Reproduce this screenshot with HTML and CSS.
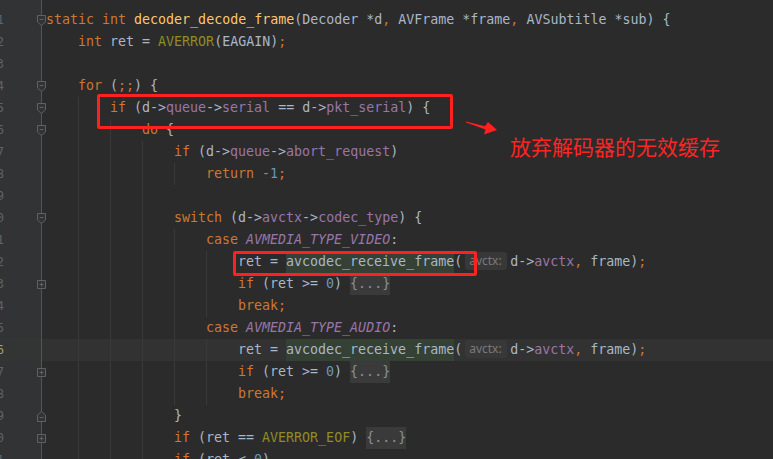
FILE: index.html
```html
<!DOCTYPE html>
<html lang="zh">
<head>
    <meta charset="UTF-8">
    <title>decoder_decode_frame</title>
    <link rel="stylesheet" href="styles.css">
</head>
<body>
<div class="editor">
    <div class="line">
        <div class="gut"><span class="num">581</span><svg class="fold" viewBox="0 0 9 11"><path d="M0.5 0.5H8.5V7L4.5 10.5L0.5 7Z"/><path d="M2.5 4.5H6.5"/></svg></div>
        <div class="code"><span class="t"><span class="k">static int</span> <span class="f">decoder_decode_frame</span>(Decoder *d<span class="k">,</span> AVFrame *frame<span class="k">,</span> AVSubtitle *sub) {</span></div>
    </div>
    <div class="line">
        <div class="gut"><span class="num">582</span></div>
        <div class="code"><span class="i"></span><span class="t"><span class="k">int</span> ret = <span class="m">AVERROR</span>(EAGAIN)<span class="k">;</span></span></div>
    </div>
    <div class="line">
        <div class="gut"><span class="num">583</span></div>
        <div class="code"></div>
    </div>
    <div class="line">
        <div class="gut"><span class="num">584</span><svg class="fold" viewBox="0 0 9 11"><path d="M0.5 0.5H8.5V7L4.5 10.5L0.5 7Z"/><path d="M2.5 4.5H6.5"/></svg></div>
        <div class="code"><span class="i"></span><span class="t"><span class="k">for</span> (<span class="k">;;</span>) {</span></div>
    </div>
    <div class="line">
        <div class="gut"><span class="num">585</span><svg class="fold" viewBox="0 0 9 11"><path d="M0.5 0.5H8.5V7L4.5 10.5L0.5 7Z"/><path d="M2.5 4.5H6.5"/></svg></div>
        <div class="code"><span class="i"></span><span class="i g"></span><span class="t"><span class="k">if</span> (d-&gt;<span class="p">queue</span>-&gt;<span class="p">serial</span> == d-&gt;<span class="p">pkt_serial</span>) {</span></div>
    </div>
    <div class="line">
        <div class="gut"><span class="num">586</span><svg class="fold" viewBox="0 0 9 11"><path d="M0.5 0.5H8.5V7L4.5 10.5L0.5 7Z"/><path d="M2.5 4.5H6.5"/></svg></div>
        <div class="code"><span class="i"></span><span class="i g"></span><span class="i g"></span><span class="t"><span class="k">do</span> {</span></div>
    </div>
    <div class="line">
        <div class="gut"><span class="num">587</span></div>
        <div class="code"><span class="i"></span><span class="i g"></span><span class="i g"></span><span class="i g"></span><span class="t"><span class="k">if</span> (d-&gt;<span class="p">queue</span>-&gt;<span class="p">abort_request</span>)</span></div>
    </div>
    <div class="line">
        <div class="gut"><span class="num">588</span></div>
        <div class="code"><span class="i"></span><span class="i g"></span><span class="i g"></span><span class="i g"></span><span class="i g"></span><span class="t"><span class="k">return</span> <span class="n">-1</span><span class="k">;</span></span></div>
    </div>
    <div class="line">
        <div class="gut"><span class="num">589</span></div>
        <div class="code"><span class="i"></span><span class="i g"></span><span class="i g"></span><span class="i g"></span></div>
    </div>
    <div class="line">
        <div class="gut"><span class="num">590</span><svg class="fold" viewBox="0 0 9 11"><path d="M0.5 0.5H8.5V7L4.5 10.5L0.5 7Z"/><path d="M2.5 4.5H6.5"/></svg></div>
        <div class="code"><span class="i"></span><span class="i g"></span><span class="i g"></span><span class="i g"></span><span class="t"><span class="k">switch</span> (d-&gt;<span class="p">avctx</span>-&gt;<span class="p">codec_type</span>) {</span></div>
    </div>
    <div class="line">
        <div class="gut"><span class="num">591</span></div>
        <div class="code"><span class="i"></span><span class="i g"></span><span class="i g"></span><span class="i g"></span><span class="i g"></span><span class="t"><span class="k">case</span> <span class="e">AVMEDIA_TYPE_VIDEO</span>:</span></div>
    </div>
    <div class="line">
        <div class="gut"><span class="num">592</span></div>
        <div class="code"><span class="i"></span><span class="i g"></span><span class="i g"></span><span class="i g"></span><span class="i g"></span><span class="i g"></span><span class="t">ret = <span class="u">avcodec_receive_frame</span>(<span class="hint">avctx:</span>d-&gt;<span class="p">avctx</span><span class="k">,</span> frame)<span class="k">;</span></span></div>
    </div>
    <div class="line">
        <div class="gut"><span class="num">593</span><svg class="fold" viewBox="0 0 9 11"><path d="M0.5 1.5H8.5V9.5H0.5Z"/><path d="M2.5 5.5H6.5M4.5 3.5V7.5"/></svg></div>
        <div class="code"><span class="i"></span><span class="i g"></span><span class="i g"></span><span class="i g"></span><span class="i g"></span><span class="i g"></span><span class="t"><span class="k">if</span> (ret &gt;= <span class="n">0</span>) <span class="folded">{...}</span></span></div>
    </div>
    <div class="line">
        <div class="gut"><span class="num">594</span></div>
        <div class="code"><span class="i"></span><span class="i g"></span><span class="i g"></span><span class="i g"></span><span class="i g"></span><span class="i g"></span><span class="t"><span class="k">break;</span></span></div>
    </div>
    <div class="line">
        <div class="gut"><span class="num">595</span></div>
        <div class="code"><span class="i"></span><span class="i g"></span><span class="i g"></span><span class="i g"></span><span class="i g"></span><span class="t"><span class="k">case</span> <span class="e">AVMEDIA_TYPE_AUDIO</span>:</span></div>
    </div>
    <div class="line cur">
        <div class="gut"><span class="num">596</span></div>
        <div class="code"><span class="i"></span><span class="i g"></span><span class="i g"></span><span class="i g"></span><span class="i g"></span><span class="i g"></span><span class="t">ret = <span class="u">avcodec_receive_frame</span>(<span class="hint">avctx:</span>d-&gt;<span class="p">avctx</span><span class="k">,</span> frame)<span class="k">;</span></span></div>
    </div>
    <div class="line">
        <div class="gut"><span class="num">597</span><svg class="fold" viewBox="0 0 9 11"><path d="M0.5 1.5H8.5V9.5H0.5Z"/><path d="M2.5 5.5H6.5M4.5 3.5V7.5"/></svg></div>
        <div class="code"><span class="i"></span><span class="i g"></span><span class="i g"></span><span class="i g"></span><span class="i g"></span><span class="i g"></span><span class="t"><span class="k">if</span> (ret &gt;= <span class="n">0</span>) <span class="folded">{...}</span></span></div>
    </div>
    <div class="line">
        <div class="gut"><span class="num">598</span></div>
        <div class="code"><span class="i"></span><span class="i g"></span><span class="i g"></span><span class="i g"></span><span class="i g"></span><span class="i g"></span><span class="t"><span class="k">break;</span></span></div>
    </div>
    <div class="line">
        <div class="gut"><span class="num">599</span><svg class="fold" viewBox="0 0 9 11"><path d="M0.5 10.5H8.5V4L4.5 0.5L0.5 4Z"/><path d="M2.5 6.5H6.5"/></svg></div>
        <div class="code"><span class="i"></span><span class="i g"></span><span class="i g"></span><span class="i g"></span><span class="t">}</span></div>
    </div>
    <div class="line">
        <div class="gut"><span class="num">600</span><svg class="fold" viewBox="0 0 9 11"><path d="M0.5 1.5H8.5V9.5H0.5Z"/><path d="M2.5 5.5H6.5M4.5 3.5V7.5"/></svg></div>
        <div class="code"><span class="i"></span><span class="i g"></span><span class="i g"></span><span class="i g"></span><span class="t"><span class="k">if</span> (ret == <span class="m">AVERROR_EOF</span>) <span class="folded">{...}</span></span></div>
    </div>
    <div class="line">
        <div class="gut"><span class="num">601</span></div>
        <div class="code"><span class="i"></span><span class="i g"></span><span class="i g"></span><span class="i g"></span><span class="t"><span class="k">if</span> (ret &lt; <span class="n">0</span>)</span></div>
    </div>

    <!-- anotaciones en rojo encima del codigo -->
    <div class="mark mark-if"></div>
    <div class="mark mark-ret"></div>
    <svg class="arrow" viewBox="0 0 40 20"><path d="M2 4.5L21 9.2L24 5L33 13L20 17.5L21.5 12.6L2 5.6Z"/></svg>
    <p class="note">放弃解码器的无效缓存</p>
</div>
</body>
</html>
```

FILE: styles.css
```css
body {
    margin: 0;
    height: 459px;
    overflow: hidden;
    background: linear-gradient(to right, #313335 0, #313335 41px, #555555 41px, #555555 42px, #2b2b2b 42px);
    font-family: "DejaVu Sans Mono", "Liberation Mono", monospace;
    font-size: 13.3px;
    color: #a9b7c6;
}
.editor {
    position: relative;
    padding-top: 9px;
}
.line {
    display: flex;
    height: 22px;
}
.gut {
    position: relative;
    width: 41px;
    flex: none;
}
.num {
    display: flex;
    justify-content: flex-end;
    width: 4px;
    overflow: hidden;
    font-size: 12px;
    line-height: 22px;
    color: #606366;
}
.fold {
    position: absolute;
    left: 37px;
    top: 6px;
    width: 9px;
    height: 11px;
    z-index: 2;
}
.fold path {
    fill: #313335;
    stroke: #5f6163;
    stroke-width: 1;
}
.code {
    display: flex;
    flex: 1;
    margin-left: 1px;
    padding-left: 4px;
}
.cur .code {
    background-color: #323232;
}
.cur .gut {
    background-color: #333434;
}
.cur .num {
    color: #a49f6a;
}
.i {
    flex: none;
    width: 32px;
}
.i.g {
    box-shadow: inset 1px 0 0 #393939;
}
.t {
    white-space: pre;
    line-height: 22px;
}
.k { color: #cc7832; }
.f { color: #ffc66d; }
.m { color: #908b25; }
.p { color: #9876aa; }
.n { color: #6897bb; }
.e {
    color: #9876aa;
    font-style: italic;
}
.u {
    display: inline-block;
    background-color: #344134;
}
.hint {
    display: inline-block;
    width: 42px;
    height: 18px;
    margin: 0 3px;
    box-sizing: border-box;
    padding-left: 4px;
    background-color: #383838;
    border-radius: 3px;
    font-family: "Noto Sans", "Open Sans", sans-serif;
    font-size: 12px;
    line-height: 18px;
    color: #7a7a7a;
    vertical-align: 1px;
}
.folded {
    display: inline-block;
    background-color: #3a3a3a;
    color: #85919b;
}
.mark {
    position: absolute;
    box-sizing: border-box;
    border: 3px solid #ff2020;
    border-radius: 2px;
}
.mark-if {
    left: 97px;
    top: 94px;
    width: 356px;
    height: 35px;
}
.mark-ret {
    left: 233px;
    top: 251px;
    width: 244px;
    height: 25px;
}
.arrow {
    position: absolute;
    left: 464px;
    top: 117px;
    width: 40px;
    height: 20px;
}
.arrow path {
    fill: #ff2020;
}
.note {
    position: absolute;
    left: 510px;
    top: 135px;
    margin: 0;
    font-family: "Noto Sans CJK SC", sans-serif;
    font-size: 21px;
    line-height: 22px;
    color: #ff2424;
    white-space: nowrap;
}
```
